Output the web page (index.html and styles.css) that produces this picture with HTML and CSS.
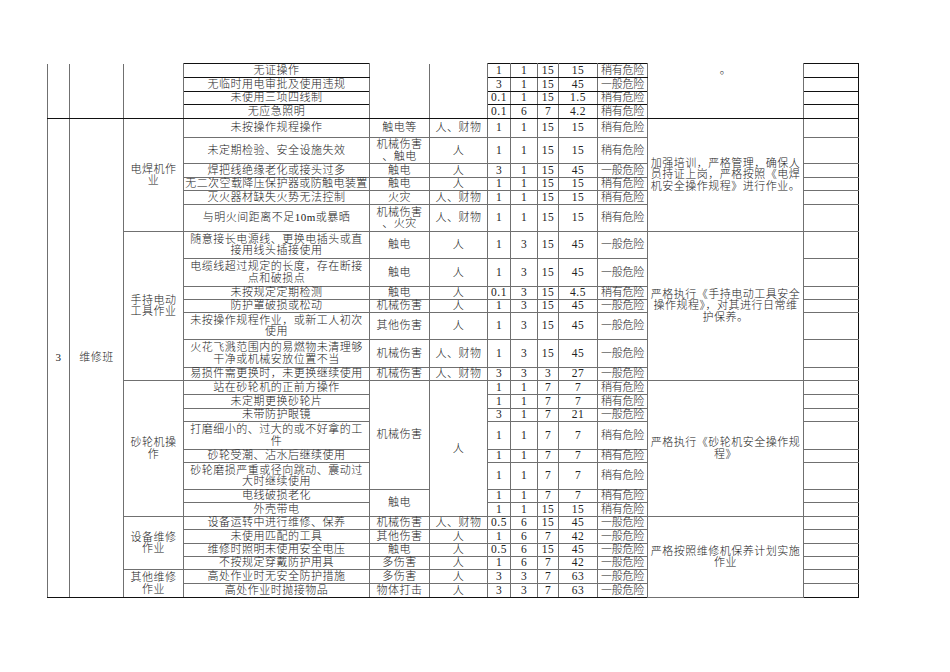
FILE: index.html
```html
<!DOCTYPE html>
<html lang="zh-CN">
<head>
<meta charset="utf-8">
<title>维修班危险源辨识</title>
<link rel="stylesheet" href="styles.css">
</head>
<body>
<table class="sheet">
<colgroup>
<col class="c-no"><col class="c-team"><col class="c-act"><col class="c-src"><col class="c-type"><col class="c-obj">
<col class="c-l"><col class="c-e"><col class="c-c"><col class="c-d"><col class="c-risk"><col class="c-ctrl"><col class="c-blank">
</colgroup>
<tbody>
<tr class="h14 top">
<td rowspan="4" class="nt"></td><td rowspan="4" class="nt"></td><td rowspan="4" class="nt"></td>
<td>无证操作</td><td rowspan="4" class="nt"></td><td rowspan="4" class="nt"></td>
<td class="n">1</td><td class="n">1</td><td class="n">15</td><td class="n">15</td><td class="risk">稍有危险</td>
<td rowspan="4" class="nt ctrl vtop">。</td><td></td>
</tr>
<tr class="h14 top"><td>无临时用电审批及使用违规</td><td class="n">3</td><td class="n">1</td><td class="n">15</td><td class="n">45</td><td class="risk">一般危险</td><td></td></tr>
<tr class="h13 top"><td>未使用三项四线制</td><td class="n">0.1</td><td class="n">1</td><td class="n">15</td><td class="n">1.5</td><td class="risk">稍有危险</td><td></td></tr>
<tr class="h14 top"><td>无应急照明</td><td class="n">0.1</td><td class="n">6</td><td class="n">7</td><td class="n">4.2</td><td class="risk">稍有危险</td><td></td></tr>

<tr class="h19">
<td rowspan="27">3</td><td rowspan="27">维修班</td><td rowspan="6">电焊机作<br>业</td>
<td>未按操作规程操作</td><td>触电等</td><td>人、财物</td>
<td class="n">1</td><td class="n">1</td><td class="n">15</td><td class="n">15</td><td class="risk">稍有危险</td>
<td rowspan="6" class="ctrl">加强培训，严格管理，确保人<br>员持证上岗，严格按照《电焊<br>机安全操作规程》进行作业。</td><td></td>
</tr>
<tr class="h26"><td>未定期检验、安全设施失效</td><td>机械伤害<br>、触电</td><td>人</td><td class="n">1</td><td class="n">1</td><td class="n">15</td><td class="n">15</td><td class="risk">稍有危险</td><td></td></tr>
<tr class="h14"><td>焊把线绝缘老化或接头过多</td><td>触电</td><td>人</td><td class="n">3</td><td class="n">1</td><td class="n">15</td><td class="n">45</td><td class="risk">一般危险</td><td></td></tr>
<tr class="h13"><td class="tight">无二次空载降压保护器或防触电装置</td><td>触电</td><td>人</td><td class="n">1</td><td class="n">1</td><td class="n">15</td><td class="n">15</td><td class="risk">稍有危险</td><td></td></tr>
<tr class="h14"><td>灭火器材缺失火势无法控制</td><td>火灾</td><td>人、财物</td><td class="n">1</td><td class="n">1</td><td class="n">15</td><td class="n">15</td><td class="risk">稍有危险</td><td></td></tr>
<tr class="h27"><td>与明火间距离不足10m或暴晒</td><td>机械伤害<br>、火灾</td><td>人、财物</td><td class="n">1</td><td class="n">1</td><td class="n">15</td><td class="n">15</td><td class="risk">稍有危险</td><td></td></tr>

<tr class="h27">
<td rowspan="7">手持电动<br>工具作业</td>
<td>随意接长电源线、更换电插头或直<br>接用线头插接使用</td><td>触电</td><td>人</td>
<td class="n">1</td><td class="n">3</td><td class="n">15</td><td class="n">45</td><td class="risk">一般危险</td>
<td rowspan="7" class="ctrl">严格执行《手持电动工具安全<br>操作规程》，对其进行日常维<br>护保养。</td><td></td>
</tr>
<tr class="h28"><td>电缆线超过规定的长度，存在断接<br>点和破损点</td><td>触电</td><td>人</td><td class="n">1</td><td class="n">3</td><td class="n">15</td><td class="n">45</td><td class="risk">一般危险</td><td></td></tr>
<tr class="h13"><td>未按规定定期检测</td><td>触电</td><td>人</td><td class="n">0.1</td><td class="n">3</td><td class="n">15</td><td class="n">4.5</td><td class="risk">稍有危险</td><td></td></tr>
<tr class="h13"><td>防护罩破损或松动</td><td>机械伤害</td><td>人</td><td class="n">1</td><td class="n">3</td><td class="n">15</td><td class="n">45</td><td class="risk">一般危险</td><td></td></tr>
<tr class="h27"><td>未按操作规程作业，或新工人初次<br>使用</td><td>其他伤害</td><td>人</td><td class="n">1</td><td class="n">3</td><td class="n">15</td><td class="n">45</td><td class="risk">一般危险</td><td></td></tr>
<tr class="h28"><td>火花飞溅范围内的易燃物未清理够<br>干净或机械安放位置不当</td><td>机械伤害</td><td>人、财物</td><td class="n">1</td><td class="n">3</td><td class="n">15</td><td class="n">45</td><td class="risk">一般危险</td><td></td></tr>
<tr class="h13"><td>易损件需更换时，未更换继续使用</td><td>机械伤害</td><td>人、财物</td><td class="n">3</td><td class="n">3</td><td class="n">3</td><td class="n">27</td><td class="risk">一般危险</td><td></td></tr>

<tr class="h14">
<td rowspan="8">砂轮机操<br>作</td>
<td>站在砂轮机的正前方操作</td><td rowspan="6">机械伤害</td><td rowspan="8">人</td>
<td class="n">1</td><td class="n">1</td><td class="n">7</td><td class="n">7</td><td class="risk">稍有危险</td>
<td rowspan="8" class="ctrl">严格执行《砂轮机安全操作规<br>程》</td><td></td>
</tr>
<tr class="h14"><td>未定期更换砂轮片</td><td class="n">1</td><td class="n">1</td><td class="n">7</td><td class="n">7</td><td class="risk">稍有危险</td><td></td></tr>
<tr class="h13"><td>未带防护眼镜</td><td class="n">3</td><td class="n">1</td><td class="n">7</td><td class="n">21</td><td class="risk">一般危险</td><td></td></tr>
<tr class="h28"><td>打磨细小的、过大的或不好拿的工<br>件</td><td class="n">1</td><td class="n">1</td><td class="n">7</td><td class="n">7</td><td class="risk">稍有危险</td><td></td></tr>
<tr class="h13"><td>砂轮受潮、沾水后继续使用</td><td class="n">1</td><td class="n">1</td><td class="n">7</td><td class="n">7</td><td class="risk">稍有危险</td><td></td></tr>
<tr class="h27"><td>砂轮磨损严重或径向跳动、震动过<br>大时继续使用</td><td class="n">1</td><td class="n">1</td><td class="n">7</td><td class="n">7</td><td class="risk">稍有危险</td><td></td></tr>
<tr class="h13"><td>电线破损老化</td><td rowspan="2">触电</td><td class="n">1</td><td class="n">1</td><td class="n">7</td><td class="n">7</td><td class="risk">稍有危险</td><td></td></tr>
<tr class="h14"><td>外壳带电</td><td class="n">1</td><td class="n">1</td><td class="n">15</td><td class="n">15</td><td class="risk">稍有危险</td><td></td></tr>

<tr class="h13">
<td rowspan="4">设备维修<br>作业</td>
<td>设备运转中进行维修、保养</td><td>机械伤害</td><td>人、财物</td>
<td class="n">0.5</td><td class="n">6</td><td class="n">15</td><td class="n">45</td><td class="risk">一般危险</td>
<td rowspan="6" class="ctrl">严格按照维修机保养计划实施<br>作业</td><td></td>
</tr>
<tr class="h14"><td>未使用匹配的工具</td><td>其他伤害</td><td>人</td><td class="n">1</td><td class="n">6</td><td class="n">7</td><td class="n">42</td><td class="risk">一般危险</td><td></td></tr>
<tr class="h13"><td>维修时照明未使用安全电压</td><td>触电</td><td>人</td><td class="n">0.5</td><td class="n">6</td><td class="n">15</td><td class="n">45</td><td class="risk">一般危险</td><td></td></tr>
<tr class="h13"><td>不按规定穿戴防护用具</td><td>多伤害</td><td>人</td><td class="n">1</td><td class="n">6</td><td class="n">7</td><td class="n">42</td><td class="risk">一般危险</td><td></td></tr>
<tr class="h14">
<td rowspan="2">其他维修<br>作业</td>
<td>高处作业时无安全防护措施</td><td>多伤害</td><td>人</td><td class="n">3</td><td class="n">3</td><td class="n">7</td><td class="n">63</td><td class="risk">一般危险</td><td></td>
</tr>
<tr class="h14 last"><td>高处作业时抛接物品</td><td>物体打击</td><td>人</td><td class="n">3</td><td class="n">3</td><td class="n">7</td><td class="n">63</td><td class="risk">一般危险</td><td></td></tr>
</tbody>
</table>
</body>
</html>
```

FILE: styles.css
```css
html, body {
  margin: 0;
  padding: 0;
  background: #ffffff;
}

body {
  padding: 63px 0 0 47px;
  font-family: "Liberation Serif", "Noto Sans CJK SC", serif;
  font-size: 11px;
  font-weight: 300;
  color: #222;
}

.sheet {
  border-collapse: collapse;
  table-layout: fixed;
  width: 811px;
}

.c-no { width: 22px; }
.c-team { width: 54px; }
.c-act { width: 60px; }
.c-src { width: 186px; }
.c-type { width: 60px; }
.c-obj { width: 58px; }
.c-l { width: 23px; }
.c-e { width: 27px; }
.c-c { width: 21px; }
.c-d { width: 39px; }
.c-risk { width: 50px; }
.c-ctrl { width: 156px; }
.c-blank { width: 55px; }

.sheet td {
  border: 1px solid #707070;
  padding: 0;
  text-align: center;
  vertical-align: middle;
  white-space: nowrap;
  overflow: visible;
  line-height: 11.5px;
  letter-spacing: 0.5px;
}

.sheet tr.top td {
  border-top-color: #111;
  border-bottom-color: #111;
}

.sheet td.nt {
  border-top: none;
}

.sheet td:last-child {
  border-right-color: #111;
}

.sheet tr.last td,
.sheet td[rowspan="27"],
.sheet td[rowspan="2"]:first-child {
  border-bottom-color: #111;
}

.sheet td.n {
  font-size: 11.5px;
  letter-spacing: 0.5px;
}

.sheet td.risk {
  letter-spacing: -0.2px;
}

.sheet td.tight {
  letter-spacing: 0.4px;
}

.sheet td.vtop {
  vertical-align: top;
  padding-top: 1px;
}

.h13 { height: 13px; }
.h14 { height: 14px; }
.h19 { height: 19px; }
.h26 { height: 26px; }
.h27 { height: 27px; }
.h28 { height: 28px; }
```
